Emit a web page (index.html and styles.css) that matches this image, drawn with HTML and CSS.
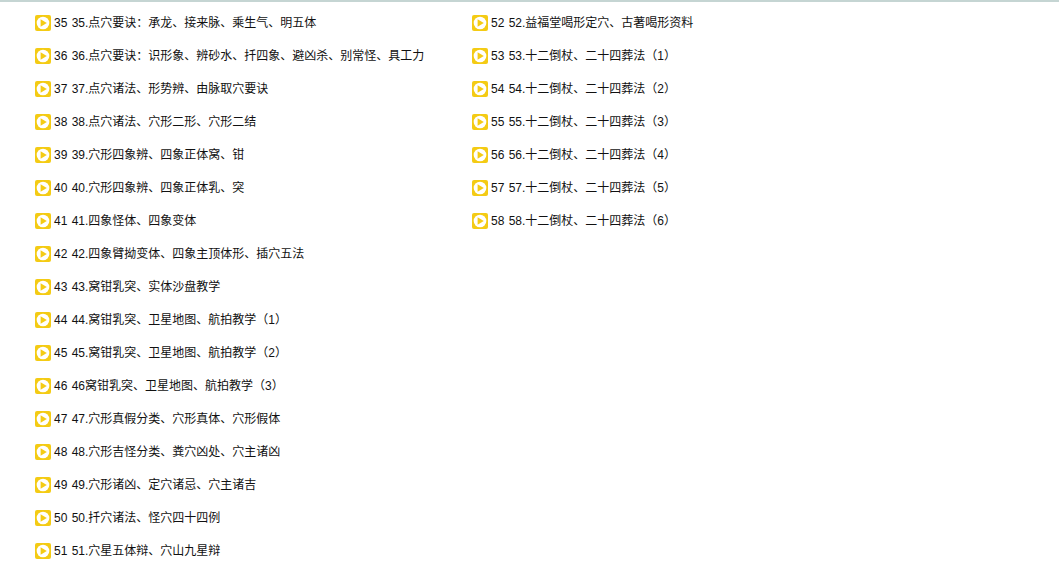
FILE: index.html
```html
<!DOCTYPE html>
<html lang="zh-CN">
<head>
<meta charset="utf-8">
<title>课程目录</title>
<link rel="stylesheet" href="styles.css">
</head>
<body>
<svg class="defs" width="0" height="0" aria-hidden="true"><symbol id="play" viewBox="0 0 16 16"><rect width="16" height="16" rx="2" fill="#f4cb14"/><circle cx="8" cy="8" r="6.3" fill="#fff"/><path d="M5.6 4.2 11.8 8 5.6 11.8z" fill="#f4cb14"/></symbol></svg>
<main class="lists">
<ul class="list list-left">
<li class="item"><svg class="icon"><use href="#play"/></svg><span>35 35.点穴要诀：承龙、接来脉、乘生气、明五体</span></li>
<li class="item"><svg class="icon"><use href="#play"/></svg><span>36 36.点穴要诀：识形象、辨砂水、扦四象、避凶杀、别常怪、具工力</span></li>
<li class="item"><svg class="icon"><use href="#play"/></svg><span>37 37.点穴诸法、形势辨、由脉取穴要诀</span></li>
<li class="item"><svg class="icon"><use href="#play"/></svg><span>38 38.点穴诸法、穴形二形、穴形二结</span></li>
<li class="item"><svg class="icon"><use href="#play"/></svg><span>39 39.穴形四象辨、四象正体窝、钳</span></li>
<li class="item"><svg class="icon"><use href="#play"/></svg><span>40 40.穴形四象辨、四象正体乳、突</span></li>
<li class="item"><svg class="icon"><use href="#play"/></svg><span>41 41.四象怪体、四象变体</span></li>
<li class="item"><svg class="icon"><use href="#play"/></svg><span>42 42.四象臂拗变体、四象主顶体形、插穴五法</span></li>
<li class="item"><svg class="icon"><use href="#play"/></svg><span>43 43.窝钳乳突、实体沙盘教学</span></li>
<li class="item"><svg class="icon"><use href="#play"/></svg><span>44 44.窝钳乳突、卫星地图、航拍教学（1）</span></li>
<li class="item"><svg class="icon"><use href="#play"/></svg><span>45 45.窝钳乳突、卫星地图、航拍教学（2）</span></li>
<li class="item"><svg class="icon"><use href="#play"/></svg><span>46 46窝钳乳突、卫星地图、航拍教学（3）</span></li>
<li class="item"><svg class="icon"><use href="#play"/></svg><span>47 47.穴形真假分类、穴形真体、穴形假体</span></li>
<li class="item"><svg class="icon"><use href="#play"/></svg><span>48 48.穴形吉怪分类、粪穴凶处、穴主诸凶</span></li>
<li class="item"><svg class="icon"><use href="#play"/></svg><span>49 49.穴形诸凶、定穴诸忌、穴主诸吉</span></li>
<li class="item"><svg class="icon"><use href="#play"/></svg><span>50 50.扦穴诸法、怪穴四十四例</span></li>
<li class="item"><svg class="icon"><use href="#play"/></svg><span>51 51.穴星五体辩、穴山九星辩</span></li>
</ul>
<ul class="list">
<li class="item"><svg class="icon"><use href="#play"/></svg><span>52 52.益福堂喝形定穴、古著喝形资料</span></li>
<li class="item"><svg class="icon"><use href="#play"/></svg><span>53 53.十二倒杖、二十四葬法（1）</span></li>
<li class="item"><svg class="icon"><use href="#play"/></svg><span>54 54.十二倒杖、二十四葬法（2）</span></li>
<li class="item"><svg class="icon"><use href="#play"/></svg><span>55 55.十二倒杖、二十四葬法（3）</span></li>
<li class="item"><svg class="icon"><use href="#play"/></svg><span>56 56.十二倒杖、二十四葬法（4）</span></li>
<li class="item"><svg class="icon"><use href="#play"/></svg><span>57 57.十二倒杖、二十四葬法（5）</span></li>
<li class="item"><svg class="icon"><use href="#play"/></svg><span>58 58.十二倒杖、二十四葬法（6）</span></li>
</ul>
</main>
</body>
</html>
```
FILE: styles.css
```css
html, body {
  margin: 0;
  height: 100%;
  overflow: hidden;
  background: #fff;
}
body {
  border-top: 2px solid #c5d5d3;
  box-sizing: border-box;
  font: 12px/16px "Liberation Sans", "Noto Sans CJK SC", sans-serif;
  word-spacing: 1px;
  color: #111;
}
.defs {
  display: block;
  height: 0;
}
.lists {
  display: grid;
  grid-template-columns: 437px 1fr;
  padding: 13px 0 0 35px;
}
.list {
  list-style: none;
  margin: 0;
  padding: 0;
  display: flex;
  flex-direction: column;
  gap: 17px;
}
.item {
  display: flex;
  align-items: center;
  gap: 3px;
  height: 16px;
}
.icon {
  width: 16px;
  height: 16px;
  flex: none;
}
```
